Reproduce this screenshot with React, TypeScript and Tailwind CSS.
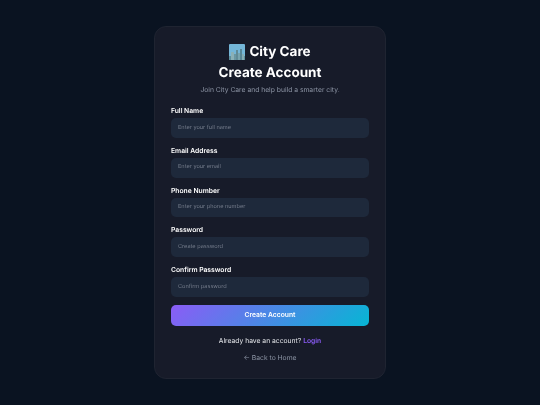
const fields = [
  ["Full Name", "Enter your full name"],
  ["Email Address", "Enter your email"],
  ["Phone Number", "Enter your phone number"],
  ["Password", "Create password"],
  ["Confirm Password", "Confirm password"],
];

function CityIcon() {
  return (
    <svg width="16" height="16" viewBox="0 0 16 16" className="shrink-0">
      <rect width="16" height="16" rx="1" fill="#74b6d8" />
      <rect y="12" width="16" height="4" fill="#5f8f9c" />
      <rect x="2" y="8" width="3" height="8" fill="#8ab0b6" />
      <rect x="5" y="10" width="2" height="6" fill="#6a97a3" />
      <rect x="7" y="6" width="2" height="10" fill="#5f8a96" />
      <rect x="9" y="9" width="2" height="7" fill="#78a4ae" />
      <rect x="11" y="5" width="2" height="11" fill="#578595" />
      <rect x="13" y="10" width="2" height="6" fill="#84acb4" />
    </svg>
  );
}

export default function App() {
  return (
    <div className="flex h-[405px] w-[540px] items-center justify-center overflow-hidden bg-[#0a1321] font-['Inter',sans-serif] antialiased [text-rendering:geometricPrecision]">
      <div className="flex h-[353px] w-[232px] flex-col rounded-[12px] border border-[#1f2431] bg-[#171b29] px-4 pt-[15px] blur-[0.3px]">
        <div className="flex h-[20px] items-center justify-center gap-[4px] text-[13.5px] font-bold leading-[20px] text-white">
          <CityIcon />
          <span>City Care</span>
        </div>
        <h1 className="mt-[1px] text-center text-[13.5px] font-bold leading-[20px] text-white">Create Account</h1>
        <p className="mt-[2px] text-center text-[6.75px] leading-[10px] text-[#8d95a5]">
          Join City Care and help build a smarter city.
        </p>
        <div className="mt-[11px] flex flex-col gap-[8px]">
          {fields.map(([label, placeholder]) => (
            <div key={label} className="flex flex-col gap-[3px]">
              <label className="text-[6.75px] font-semibold leading-[9px] text-white">{label}</label>
              <div className="flex h-[19.75px] items-center rounded-[5px] bg-[#1e293b] px-[7px] text-[5.6px] text-[#737b8a]">
                {placeholder}
              </div>
            </div>
          ))}
        </div>
        <button className="mt-[8px] h-[21px] rounded-[5px] bg-[linear-gradient(135deg,#8b5cf6,#06b6d4)] text-[6.75px] font-semibold text-white">
          Create Account
        </button>
        <p className="mt-[10px] text-center text-[6.75px] leading-[10px] text-[#e5e7eb]">
          Already have an account? <span className="font-semibold text-[#8b5cf6]">Login</span>
        </p>
        <p className="mt-[7px] text-center text-[6.75px] leading-[10px] text-[#8d95a5]">← Back to Home</p>
      </div>
    </div>
  );
}
